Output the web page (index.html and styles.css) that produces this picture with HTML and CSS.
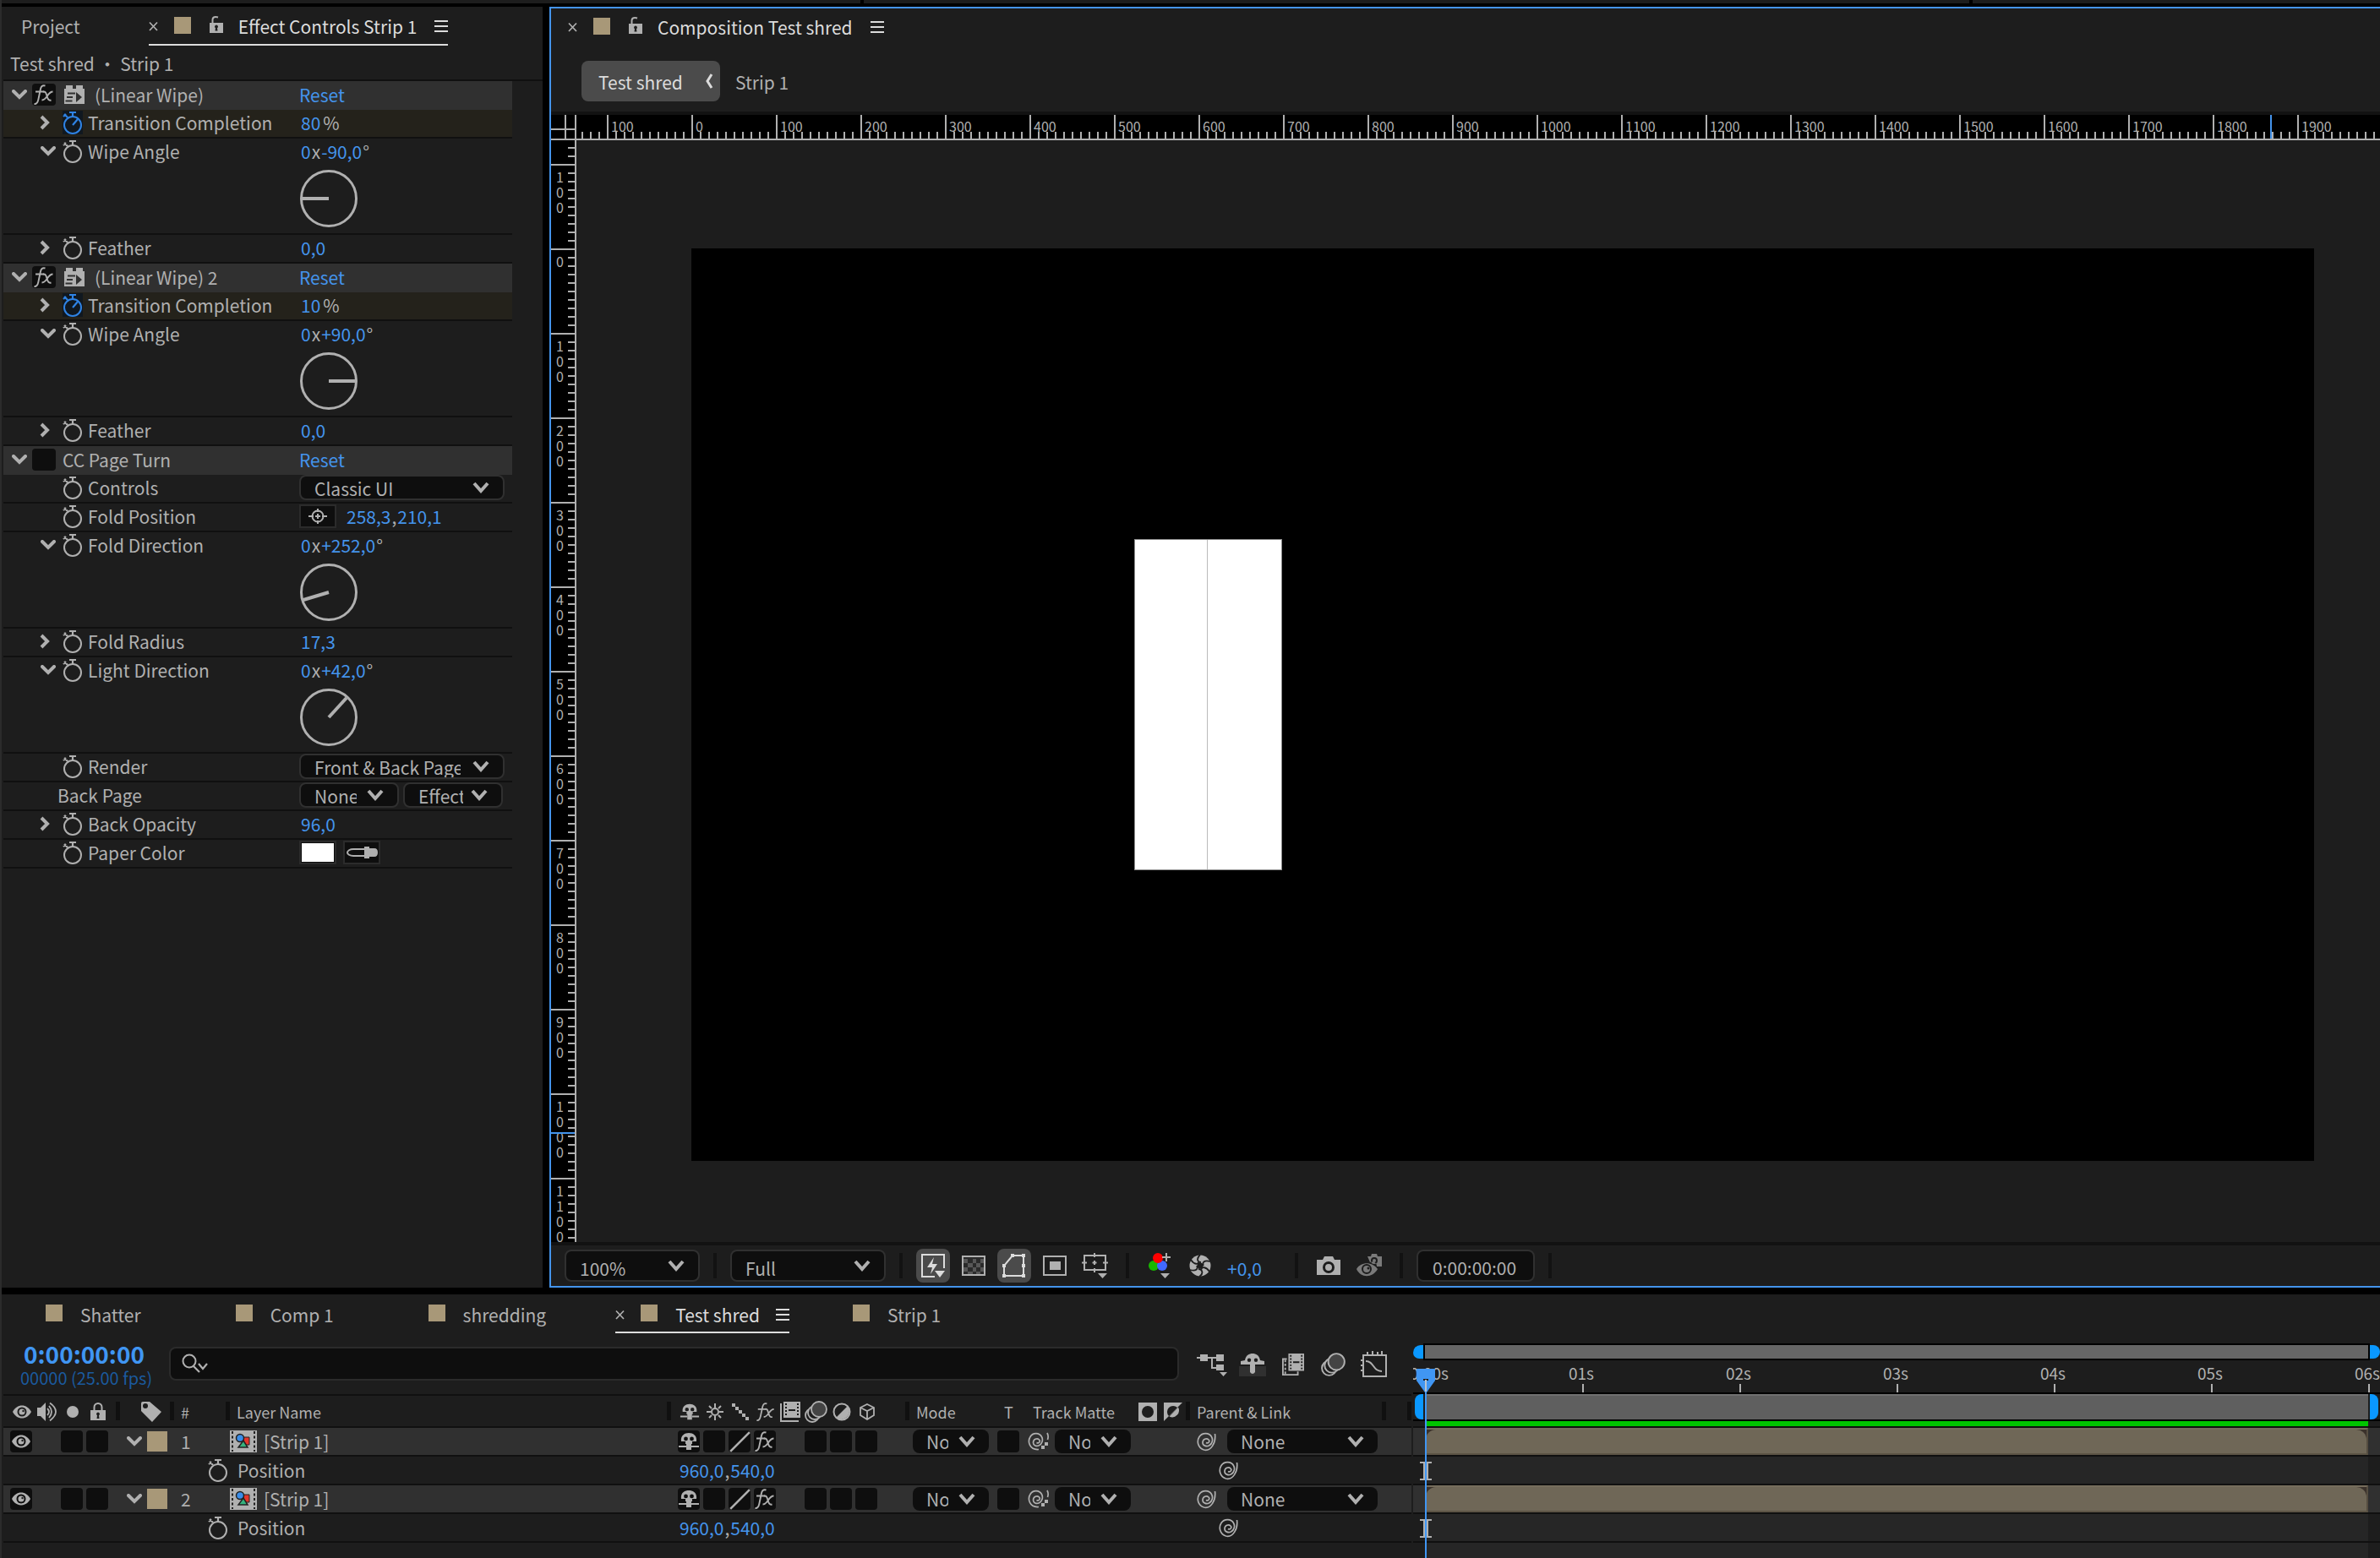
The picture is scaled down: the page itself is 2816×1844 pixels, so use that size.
FILE: index.html
```html
<!DOCTYPE html>
<html lang="en">
<head>
<meta charset="utf-8">
<title>Composition Test shred</title>
<link rel="stylesheet" href="styles.css">
</head>
<body>
<svg class="sprite" aria-hidden="true">
  <symbol id="close" viewBox="0 0 12 12"><path d="M1 1.500 10 11M10 1.500 1 11" fill="none" stroke="currentColor" stroke-width="1.700"/></symbol>
  <symbol id="menu" viewBox="0 0 16 16"><path d="M0 2h16M0 8h16M0 14h16" stroke="currentColor" stroke-width="2"/></symbol>
  <symbol id="unlock" viewBox="0 0 16 20"><path d="M3.500 9V4.500C3.500 1 7 .5 10 1.500" fill="none" stroke="currentColor" stroke-width="2"/><path fill="currentColor" fill-rule="evenodd" d="M0 8h16v12H0zM8 10.500a2 2 0 0 0-1 3.700L6.500 17.500h3L9 14.200a2 2 0 0 0-1-3.700z"/></symbol>
  <symbol id="lock" viewBox="0 0 18 22"><path d="M4.500 10V5.500a4.500 4.500 0 0 1 9 0V10" fill="none" stroke="currentColor" stroke-width="2"/><path fill="currentColor" fill-rule="evenodd" d="M0 9h18v12H0zM9 11.500a2 2 0 0 0-1 3.700L7.500 19h3L10 15.200a2 2 0 0 0-1-3.700z"/></symbol>
  <symbol id="down" viewBox="0 0 18 12"><path d="M2 2l7 7 7-7" fill="none" stroke="currentColor" stroke-width="4" stroke-linecap="round"/></symbol>
  <symbol id="right" viewBox="0 0 12 18"><path d="M2 2l7 7-7 7" fill="none" stroke="currentColor" stroke-width="4"/></symbol>
  <symbol id="fx" viewBox="0 0 26 26"><path d="M1.500 24c3 .5 4-1.500 4.800-5L8.800 7C9.500 3.500 11 1.500 14.500 2.500M3 9.500h10" fill="none" stroke="currentColor" stroke-width="1.900"/><path d="M12 9.500c3-.5 3.500 1.500 4.500 5s2 6 5 5M23.500 9.500c-3 0-4.500 2-6.500 5s-3.500 5-6.500 5" fill="none" stroke="currentColor" stroke-width="1.900"/></symbol>
  <symbol id="brick" viewBox="0 0 24 24"><path fill="currentColor" fill-rule="evenodd" d="M2 1h8v4h4V1h8v4h2v18H0V5h2zM4 9.500v2h9v-2zM3 14v2h7v-2zM1.500 18.500v2h8v-2zM14 9v12l7-6z"/></symbol>
  <symbol id="watch" viewBox="0 0 24 28"><ellipse cx="12" cy="17" rx="10" ry="10" fill="none" stroke="currentColor" stroke-width="2"/><path d="M8 2h8M12 2v5M2 4l4 4M1 7l3-3" fill="none" stroke="currentColor" stroke-width="2.200"/></symbol>
  <symbol id="watch-on" viewBox="0 0 24 28"><ellipse cx="12" cy="17" rx="10" ry="10" fill="none" stroke="currentColor" stroke-width="2"/><path d="M8 2h8M12 2v5M2 4l4 4M1 7l3-3M12 17l6-7" fill="none" stroke="currentColor" stroke-width="2.200"/></symbol>
  <symbol id="target" viewBox="0 0 24 20"><circle cx="12" cy="10" r="6.500" fill="none" stroke="currentColor" stroke-width="2"/><path d="M1 10h6M17 10h6M12 1v4M12 15v4M9 10h6M12 7v6" stroke="currentColor" stroke-width="2"/></symbol>
  <symbol id="dropper" viewBox="0 0 38 14"><path d="M24 3H9C5 3 2 5 2 7s3 4 7 4h15" fill="none" stroke="currentColor" stroke-width="2"/><path fill="currentColor" d="M22 0h6v2h6q4 0 4 5t-4 5h-6v2h-6z"/></symbol>
  <symbol id="fast" viewBox="0 0 30 30"><path d="M28 18V2H2v26h15" fill="none" stroke="currentColor" stroke-width="2"/><path fill="currentColor" d="M16 5 8 17h6l-2 8 8-12h-6zM17 21h12l-6 8z"/></symbol>
  <symbol id="checker" viewBox="0 0 28 24"><path d="M1 1h26v22H1z" fill="#2a2a2a" stroke="currentColor" stroke-width="2"/><path fill="#575757" d="M2 4h5v5H2zM13 4h4v5h-4zM7 9h6v5H7zM17 9h5v5h-5zM2 14h5v5H2zM13 14h4v5h-4zM22 4h4v5h-4zM22 14h4v5h-4zM7 19h6v3H7zM17 19h5v3h-5z"/></symbol>
  <symbol id="mask" viewBox="0 0 30 30"><path d="M3 27V15L13 3h13v24z" fill="none" stroke="currentColor" stroke-width="2"/><path fill="currentColor" d="M1 25h4v4H1zM1 13h4v4H1zM11 1h4v4h-4zM24 1h4v4h-4zM24 13h4v4h-4zM24 25h4v4h-4z"/></symbol>
  <symbol id="region" viewBox="0 0 28 24"><path d="M1 1h26v22H1z" fill="none" stroke="currentColor" stroke-width="2"/><path fill="currentColor" d="M8 7h13v10H8z"/></symbol>
  <symbol id="guides" viewBox="0 0 32 30"><path d="M3 3h25v17H3zM15 0v5M15 18v5M0 11.500h6M25 11.500h6M15 9v5M12.500 11.500h5" fill="none" stroke="currentColor" stroke-width="2"/><path fill="currentColor" d="M19 24h11l-5.500 6z"/></symbol>
  <symbol id="rgb" viewBox="0 0 28 30"><circle cx="7" cy="15" r="6" fill="#18b800"/><circle cx="17" cy="15" r="6" fill="#4169ff"/><circle cx="12" cy="6" r="6" fill="#f00"/><path d="M22 0v10M17 5h10" stroke="currentColor" stroke-width="2"/><path fill="currentColor" d="M15 24h11l-5.500 6z"/></symbol>
  <symbol id="shutter" viewBox="0 0 26 26"><circle cx="13" cy="13" r="12.500" fill="currentColor"/><path d="M13 0c-5 5-3 9 1 9M25 8c-7-2-10 1-8 5M24 20c-4-6-9-6-10-2M12 26c6-4 3-9-1-9M1 18c7 2 10-1 8-5M2 6c4 6 9 6 10 2" fill="none" stroke="#1d1d1d" stroke-width="1.800"/><circle cx="13" cy="13" r="3.500" fill="#1d1d1d"/></symbol>
  <symbol id="camera" viewBox="0 0 28 24"><path fill="currentColor" fill-rule="evenodd" d="M9 1h10l2 4h7v18H0V5h7zM14 7a7 7 0 1 0 0 14 7 7 0 0 0 0-14zm0 3a4 4 0 1 1 0 8 4 4 0 0 1 0-8z"/></symbol>
  <symbol id="snap" viewBox="0 0 30 28"><path fill="currentColor" fill-rule="evenodd" d="M13 3h4l1-3h6l1 3h5v12h-6c0-6-6-6-8-5zM21 4a4 4 0 1 0 0 8 4 4 0 0 0 0-8zm0 2a2 2 0 1 1 0 4 2 2 0 0 1 0-4zM0 18C5 9 19 9 25 18c-6 11-20 11-25 0zm12-6a6 6 0 1 0 0 12 6 6 0 0 0 0-12z"/><circle cx="12" cy="18" r="4" fill="currentColor"/><circle cx="14" cy="17" r="1.500" fill="#1d1d1d"/></symbol>
  <symbol id="search" viewBox="0 0 32 24"><circle cx="9" cy="9" r="7.500" fill="none" stroke="currentColor" stroke-width="2"/><path d="M14 15l7 7M20 12l5 6 5-6" fill="none" stroke="currentColor" stroke-width="2.200"/></symbol>
  <symbol id="eye" viewBox="0 0 22 16"><path fill="currentColor" fill-rule="evenodd" d="M0 8C5-2 17-2 22 8c-5 10-17 10-22 0zM11 2.500a5.500 5.500 0 1 0 0 11 5.500 5.500 0 0 0 0-11z"/><circle cx="11" cy="8" r="3.500" fill="currentColor"/><circle cx="12.500" cy="7" r="1.200" fill="#1d1d1d"/></symbol>
  <symbol id="speaker" viewBox="0 0 24 24"><path fill="currentColor" d="M0 7h4l6-6v22l-6-6H0z"/><path d="M12 8q4 4 0 8M14 5q6 7 0 14M15 1.500q14 10 0 21" fill="none" stroke="currentColor" stroke-width="1.800"/></symbol>
  <symbol id="dot" viewBox="0 0 14 14"><circle cx="7" cy="7" r="7" fill="currentColor"/></symbol>
  <symbol id="tag" viewBox="0 0 24 24"><path fill="currentColor" fill-rule="evenodd" d="M0 2q0-2 2-2h8l14 12-11 12L0 11zm5 0a3 3 0 1 0 0 6 3 3 0 0 0 0-6z"/></symbol>
  <symbol id="shy" viewBox="0 0 26 22"><path fill="currentColor" fill-rule="evenodd" d="M4 11C3 4 8 1 13 1s10 3 9 10h-5v3h-1v7h-6v-7H9v-3zM9.500 5.500a2.400 2.400 0 1 0 0 4.800 2.400 2.400 0 0 0 0-4.800zm7 0a2.400 2.400 0 1 0 0 4.800 2.400 2.400 0 0 0 0-4.800z"/><path d="M1 17h9M16 17h9" stroke="currentColor" stroke-width="2"/></symbol>
  <symbol id="sun" viewBox="0 0 22 22"><circle cx="11" cy="11" r="4" fill="none" stroke="currentColor" stroke-width="2"/><path d="M11 1v5M11 16v5M1 11h5M16 11h5M4 4l3 3M15 15l3 3M18 4l-3 3M7 15l-3 3" stroke="currentColor" stroke-width="2"/></symbol>
  <symbol id="stairs" viewBox="0 0 20 20"><path fill="currentColor" d="M0 0h4v4H0zM4 4h4v4H4zM8 8h4v4H8zM12 12h4v4h-4zM16 16h4v4h-4z"/></symbol>
  <symbol id="slash" viewBox="0 0 24 24"><path d="M2 23 23 2" stroke="currentColor" stroke-width="2.400"/></symbol>
  <symbol id="film" viewBox="0 0 26 24"><path d="M1 2v21h21" fill="none" stroke="currentColor" stroke-width="2"/><path fill="currentColor" fill-rule="evenodd" d="M4 0h20v19H4zM6 2v2h2V2zM6 6v2h2V6zM6 10v2h2v-2zM6 14v2h2v-2zM20 2v2h2V2zM20 6v2h2V6zM20 10v2h2v-2zM20 14v2h2v-2zM10 9v2h8V9z"/></symbol>
  <symbol id="blur" viewBox="0 0 28 28"><circle cx="9" cy="18" r="8" fill="none" stroke="currentColor" stroke-width="1.800"/><circle cx="12" cy="15" r="8" fill="#1d1d1d" stroke="currentColor" stroke-width="1.800"/><circle cx="17" cy="11" r="9" fill="#444" stroke="currentColor" stroke-width="1.800"/></symbol>
  <symbol id="adjust" viewBox="0 0 22 22"><circle cx="11" cy="11" r="9.500" fill="none" stroke="currentColor" stroke-width="2"/><path fill="currentColor" d="M18 4a10 10 0 0 1-14 14z"/></symbol>
  <symbol id="cube" viewBox="0 0 20 20"><path d="M10 1l8 4v9l-8 5-8-5V5zM2 5l8 4 8-4M10 9v10" fill="none" stroke="currentColor" stroke-width="1.800"/></symbol>
  <symbol id="matte-a" viewBox="0 0 22 22"><path fill="currentColor" fill-rule="evenodd" d="M0 0h22v22H0zM11 4a7 7 0 1 0 0 14 7 7 0 0 0 0-14z"/></symbol>
  <symbol id="matte-b" viewBox="0 0 22 22"><path fill="currentColor" d="M0 0h22L0 22z"/><path fill="#1d1d1d" d="M16 6A7 7 0 0 0 6 16z"/><path fill="currentColor" d="M17 5.500A8 8 0 0 1 6.500 16.500z"/></symbol>
  <symbol id="swirl" viewBox="0 0 24 24"><path d="M11 13.500c2.500 1.500 5-1.500 3-3.500-2.500-2.500-7-.5-7 3.500 0 3.500 4.500 5 7.500 3.500 4-2 5-7 3-10.500C15 1.500 6.500 1 3 6.500-.5 12 1.500 20 8.500 22 16.500 24 23 14 21.500 3" fill="none" stroke="currentColor" stroke-width="1.700"/></symbol>
  <symbol id="swirl-dot" viewBox="0 0 26 24"><path d="M10.500 13.500c2.500 1.500 5-1.500 3-3.500-2.500-2.500-7-.5-7 3.500 0 3.500 4 4.500 6.500 3.500 4-1.500 5.500-7 3.500-10.500C14 1.500 6 1 3 6.500-.5 12 2 22.500 13 21.500M23 2q2 4 .5 8" fill="none" stroke="currentColor" stroke-width="1.700"/><path fill="currentColor" d="M16 17h4v4h-4zM20 13h4v4h-4z"/></symbol>
  <symbol id="comp" viewBox="0 0 32 26"><path fill="#b0b0b0" d="M0 0h32v26H0z"/><path d="M3 1v24M29 1v24" stroke="#222" stroke-width="2" stroke-dasharray="3 2.500"/><path fill="#e5352b" stroke="#222" d="M15 8h8v9h-8z"/><circle cx="12" cy="9" r="4.500" fill="#3a8de8" stroke="#222" stroke-width="1.500"/><path fill="#35b37e" stroke="#222" stroke-width="1.500" d="M16 12l5 8H10z"/></symbol>
  <symbol id="tree" viewBox="0 0 36 28"><path fill="currentColor" d="M4 2h9v8H4zM23 2h9v8h-9zM23 14h9v7h-9zM27 23h9l-4.500 5z"/><path d="M0 6h24M18 6v12h6" fill="none" stroke="currentColor" stroke-width="2"/></symbol>
  <symbol id="shy-big" viewBox="0 0 32 28"><path fill="#303030" d="M0 16h32v12H0z"/><path fill="currentColor" fill-rule="evenodd" d="M7 9c1-6 5-8 9-8s8 2 9 8l5 1v4H19v9q-3 4-6 0v-9H2v-4zm5-2.500a2.200 2.200 0 1 0 0 4.400 2.200 2.200 0 0 0 0-4.400zm8 0a2.200 2.200 0 1 0 0 4.400 2.200 2.200 0 0 0 0-4.400z"/></symbol>
  <symbol id="film-big" viewBox="0 0 28 28"><path d="M6 7H1v20h19v-4" fill="none" stroke="currentColor" stroke-width="2"/><path d="M4 8v18" stroke="currentColor" stroke-width="2" stroke-dasharray="3 2"/><path fill="currentColor" fill-rule="evenodd" d="M8 0h20v22H8zM10 2v2h2V2zM10 6v2h2V6zM10 10v2h2v-2zM10 14v2h2v-2zM10 18v2h2v-2zM24 2v2h2V2zM24 6v2h2V6zM24 10v2h2v-2zM24 14v2h2v-2zM24 18v2h2v-2zM14 10v2h8v-2z"/></symbol>
  <symbol id="graph" viewBox="0 0 32 32"><path d="M3 5h27v25H3zM8 5V1M14 5V0M20 5V1M25 5V0M3 11H0M3 17H0M3 23H0M6 12c10 0 8 12 19 12" fill="none" stroke="currentColor" stroke-width="2"/></symbol>
  <symbol id="ibeam" viewBox="0 0 14 22"><path fill="currentColor" d="M0 0h14v2h-4v18h4v2H0v-2h4V2H0z"/></symbol>
</svg>

<div class="strip"><i class="strip-gap"></i><i class="strip-gap"></i></div>

<div class="upper">
  <section class="effects" aria-label="Effect Controls">
    <div class="tabs effects-tabs">
      <button class="tab">Project</button>
      <div class="tab tab-on tab-fx"><svg class="x"><use href="#close"/></svg><i class="chip"></i><svg class="lk"><use href="#unlock"/></svg><span>Effect Controls Strip 1</span><svg class="mn"><use href="#menu"/></svg></div>
    </div>
    <p class="source">Test shred • Strip 1</p>

    <div class="list">
      <div class="head"><svg class="tw-d"><use href="#down"/></svg><label class="sw sw-fx"><input type="checkbox" aria-label="Enable (Linear Wipe)"><svg><use href="#fx"/></svg></label><svg class="brick"><use href="#brick"/></svg><span class="name">(Linear Wipe)</span><button class="val">Reset</button></div>
      <div class="row keyed"><div class="lab"><svg class="tw-r"><use href="#right"/></svg><svg class="watch on"><use href="#watch-on"/></svg>Transition Completion</div><span class="num pct"><button class="val">80</button>%</span></div>
      <div class="row bare"><div class="lab"><svg class="tw-d"><use href="#down"/></svg><svg class="watch"><use href="#watch"/></svg>Wipe Angle</div><span class="num"><button class="val">0</button>x<button class="val">-90,0</button>°</span></div>
      <div class="dial"><svg viewBox="0 0 68 68"><circle cx="34" cy="34" r="32.500"/><path d="M34 34H2"/></svg></div>
      <div class="row"><div class="lab"><svg class="tw-r"><use href="#right"/></svg><svg class="watch"><use href="#watch"/></svg>Feather</div><span class="num"><button class="val">0,0</button></span></div>

      <div class="head"><svg class="tw-d"><use href="#down"/></svg><label class="sw sw-fx"><input type="checkbox" aria-label="Enable (Linear Wipe) 2"><svg><use href="#fx"/></svg></label><svg class="brick"><use href="#brick"/></svg><span class="name">(Linear Wipe) 2</span><button class="val">Reset</button></div>
      <div class="row keyed"><div class="lab"><svg class="tw-r"><use href="#right"/></svg><svg class="watch on"><use href="#watch-on"/></svg>Transition Completion</div><span class="num pct"><button class="val">10</button>%</span></div>
      <div class="row bare"><div class="lab"><svg class="tw-d"><use href="#down"/></svg><svg class="watch"><use href="#watch"/></svg>Wipe Angle</div><span class="num"><button class="val">0</button>x<button class="val">+90,0</button>°</span></div>
      <div class="dial"><svg viewBox="0 0 68 68"><circle cx="34" cy="34" r="32.500"/><path d="M34 34H66"/></svg></div>
      <div class="row"><div class="lab"><svg class="tw-r"><use href="#right"/></svg><svg class="watch"><use href="#watch"/></svg>Feather</div><span class="num"><button class="val">0,0</button></span></div>

      <div class="head"><svg class="tw-d"><use href="#down"/></svg><label class="sw sw-fx"><input type="checkbox" aria-label="Enable CC Page Turn"></label><span class="name name-near">CC Page Turn</span><button class="val">Reset</button></div>
      <div class="row"><label class="lab" for="controls"><i class="tw-r"></i><svg class="watch"><use href="#watch"/></svg>Controls</label><select id="controls" class="drop w-full"><option>Classic UI</option></select></div>
      <div class="row"><div class="lab"><i class="tw-r"></i><svg class="watch"><use href="#watch"/></svg>Fold Position</div><button class="pick" aria-label="Pick point"><svg class="target"><use href="#target"/></svg></button><span class="num"><button class="val">258,3</button>,<button class="val">210,1</button></span></div>
      <div class="row bare"><div class="lab"><svg class="tw-d"><use href="#down"/></svg><svg class="watch"><use href="#watch"/></svg>Fold Direction</div><span class="num"><button class="val">0</button>x<button class="val">+252,0</button>°</span></div>
      <div class="dial"><svg viewBox="0 0 68 68"><circle cx="34" cy="34" r="32.500"/><path d="M34 34 4 43"/></svg></div>
      <div class="row"><div class="lab"><svg class="tw-r"><use href="#right"/></svg><svg class="watch"><use href="#watch"/></svg>Fold Radius</div><span class="num"><button class="val">17,3</button></span></div>
      <div class="row bare"><div class="lab"><svg class="tw-d"><use href="#down"/></svg><svg class="watch"><use href="#watch"/></svg>Light Direction</div><span class="num"><button class="val">0</button>x<button class="val">+42,0</button>°</span></div>
      <div class="dial"><svg viewBox="0 0 68 68"><circle cx="34" cy="34" r="32.500"/><path d="M34 34 55 11"/></svg></div>
      <div class="row"><label class="lab" for="render"><i class="tw-r"></i><svg class="watch"><use href="#watch"/></svg>Render</label><select id="render" class="drop w-full"><option>Front &amp; Back Page</option></select></div>
      <div class="row"><label class="lab lab-plain" for="back">Back Page</label><select id="back" class="drop w-half"><option>None</option></select><select class="drop w-half" aria-label="Back page source"><option>Effects &amp; Masks</option></select></div>
      <div class="row"><div class="lab"><svg class="tw-r"><use href="#right"/></svg><svg class="watch"><use href="#watch"/></svg>Back Opacity</div><span class="num"><button class="val">96,0</button></span></div>
      <div class="row"><div class="lab"><i class="tw-r"></i><svg class="watch"><use href="#watch"/></svg>Paper Color</div><button class="pick" aria-label="Paper color"><i class="paper"></i></button><button class="pick" aria-label="Eyedropper"><svg class="dropper"><use href="#dropper"/></svg></button></div>
    </div>
  </section>

  <section class="viewer" aria-label="Composition">
    <div class="tabs viewer-tabs">
      <div class="tab tab-on tab-comp"><svg class="x"><use href="#close"/></svg><i class="chip"></i><svg class="lk"><use href="#unlock"/></svg><span>Composition Test shred</span><svg class="mn"><use href="#menu"/></svg></div>
    </div>
    <nav class="crumbs"><button class="crumb crumb-on">Test shred<svg viewBox="0 0 10 18"><path d="M8 1 3 9l5 8" fill="none" stroke="currentColor" stroke-width="3"/></svg></button><button class="crumb">Strip 1</button></nav>
    <div class="stage">
      <div class="corner"></div>
      <div class="rule-x"><ol><li>100</li><li>0</li><li>100</li><li>200</li><li>300</li><li>400</li><li>500</li><li>600</li><li>700</li><li>800</li><li>900</li><li>1000</li><li>1100</li><li>1200</li><li>1300</li><li>1400</li><li>1500</li><li>1600</li><li>1700</li><li>1800</li><li>1900</li></ol><i class="mark-x"></i></div>
      <div class="rule-y"><ol><li>100</li><li>0</li><li>100</li><li>200</li><li>300</li><li>400</li><li>500</li><li>600</li><li>700</li><li>800</li><li>900</li><li>1000</li><li>1100</li></ol><i class="mark-y"></i></div>
      <div class="view"><div class="canvas"><div class="paper-strip"></div></div></div>
    </div>
    <div class="bar">
      <select class="drop zoom" aria-label="Magnification"><option>100%</option></select>
      <i class="sep"></i>
      <select class="drop res" aria-label="Resolution"><option>Full</option></select>
      <i class="sep"></i>
      <div class="tools">
        <button class="tool tool-on" aria-label="Fast previews"><svg class="i30"><use href="#fast"/></svg></button>
        <button class="tool" aria-label="Transparency grid"><svg class="i28"><use href="#checker"/></svg></button>
        <button class="tool tool-on" aria-label="Mask visibility"><svg class="i30"><use href="#mask"/></svg></button>
        <button class="tool" aria-label="Region of interest"><svg class="i28"><use href="#region"/></svg></button>
        <button class="tool" aria-label="Guides"><svg class="i32"><use href="#guides"/></svg></button>
      </div>
      <i class="sep"></i>
      <div class="tools">
        <button class="tool" aria-label="Channels"><svg class="i30"><use href="#rgb"/></svg></button>
        <button class="tool" aria-label="Reset exposure"><svg class="i28"><use href="#shutter"/></svg></button>
        <button class="val exposure">+0,0</button>
      </div>
      <i class="sep"></i>
      <div class="tools">
        <button class="tool" aria-label="Take snapshot"><svg class="i28"><use href="#camera"/></svg></button>
        <button class="tool dim" aria-label="Show snapshot"><svg class="i30"><use href="#snap"/></svg></button>
      </div>
      <i class="sep"></i>
      <input class="time" aria-label="Preview time" value="0:00:00:00">
      <i class="sep"></i>
    </div>
  </section>
</div>

<section class="timeline" aria-label="Timeline">
  <div class="tabs tl-tabs">
    <button class="tab"><i class="chip"></i>Shatter</button>
    <button class="tab"><i class="chip"></i>Comp 1</button>
    <button class="tab"><i class="chip"></i>shredding</button>
    <div class="tab tab-on"><svg class="x"><use href="#close"/></svg><i class="chip"></i><span>Test shred</span><svg class="mn"><use href="#menu"/></svg></div>
    <button class="tab"><i class="chip"></i>Strip 1</button>
  </div>
  <div class="tl-body">
    <div class="layers">
      <div class="tl-tools">
        <div class="clock"><button class="clock-main">0:00:00:00</button><span class="clock-sub">00000 (25.00 fps)</span></div>
        <label class="search"><svg><use href="#search"/></svg><input type="text" aria-label="Search layers"></label>
        <div class="tools">
          <button class="tool" aria-label="Mini-flowchart"><svg class="i36"><use href="#tree"/></svg></button>
          <button class="tool" aria-label="Hide shy layers"><svg class="i32"><use href="#shy-big"/></svg></button>
          <button class="tool" aria-label="Frame blending"><svg class="i28"><use href="#film-big"/></svg></button>
          <button class="tool" aria-label="Motion blur"><svg class="i30"><use href="#blur"/></svg></button>
          <button class="tool" aria-label="Graph editor"><svg class="i32"><use href="#graph"/></svg></button>
        </div>
      </div>
      <table class="grid">
        <colgroup><col class="c-av"><col class="c-tag"><col class="c-no"><col class="c-name"><col class="c-sw"><col class="c-mode"><col class="c-parent"><col class="c-end"></colgroup>
        <thead>
          <tr>
            <th><div class="slots"><span><svg class="g-eye"><use href="#eye"/></svg></span><span><svg class="g24"><use href="#speaker"/></svg></span><span><svg class="g14"><use href="#dot"/></svg></span><span><svg class="g-lock"><use href="#lock"/></svg></span></div></th>
            <th><div class="tagc"><svg class="g24"><use href="#tag"/></svg></div></th>
            <th><div class="pad">#</div></th>
            <th><div class="pad">Layer Name</div></th>
            <th><div class="slots"><span><svg class="g24"><use href="#shy"/></svg></span><span><svg class="g22"><use href="#sun"/></svg></span><span><svg class="g20"><use href="#stairs"/></svg></span><span><svg class="g26"><use href="#fx"/></svg></span><span><svg class="g26"><use href="#film"/></svg></span><span><svg class="g28"><use href="#blur"/></svg></span><span><svg class="g22"><use href="#adjust"/></svg></span><span><svg class="g20"><use href="#cube"/></svg></span></div></th>
            <th><div class="modes"><span>Mode</span><span>T</span><span>Track Matte</span><svg class="g22"><use href="#matte-a"/></svg><svg class="g22"><use href="#matte-b"/></svg></div></th>
            <th><div class="pad">Parent &amp; Link</div></th>
            <th></th>
          </tr>
        </thead>
        <tbody>
          <tr class="layer">
            <td><div class="slots"><label class="sw"><input type="checkbox" aria-label="Video"><svg class="g-eye"><use href="#eye"/></svg></label><span></span><label class="sw"><input type="checkbox" aria-label="Solo"></label><label class="sw"><input type="checkbox" aria-label="Lock"></label></div></td>
            <td><div class="twirl"><svg class="tw-d"><use href="#down"/></svg><i class="label-chip"></i></div></td>
            <td><div class="pad">1</div></td>
            <td><div class="lname"><svg><use href="#comp"/></svg>[Strip 1]</div></td>
            <td><div class="slots"><label class="sw"><input type="checkbox" aria-label="Shy"><svg class="g26"><use href="#shy"/></svg></label><label class="sw"><input type="checkbox" aria-label="Collapse"></label><label class="sw"><input type="checkbox" aria-label="Quality"><svg class="g24"><use href="#slash"/></svg></label><label class="sw"><input type="checkbox" aria-label="Effects"><svg class="g26"><use href="#fx"/></svg></label><span></span><label class="sw"><input type="checkbox" aria-label="Motion blur"></label><label class="sw"><input type="checkbox" aria-label="Adjustment"></label><label class="sw"><input type="checkbox" aria-label="3D"></label></div></td>
            <td><div class="mrow"><select class="drop flat" aria-label="Mode"><option>Normal</option></select><label class="sw"><input type="checkbox" aria-label="Preserve transparency"></label><svg class="g26"><use href="#swirl-dot"/></svg><select class="drop flat" aria-label="Track matte"><option>No Matte</option></select></div></td>
            <td><div class="prow"><svg class="g24"><use href="#swirl"/></svg><select class="drop flat" aria-label="Parent"><option>None</option></select></div></td>
            <td></td>
          </tr>
          <tr>
            <td colspan="4"><div class="prop"><svg class="watch"><use href="#watch"/></svg>Position</div></td>
            <td><div class="pval"><button class="val">960,0</button>,<button class="val">540,0</button></div></td>
            <td></td>
            <td><div class="plink"><svg class="g24"><use href="#swirl"/></svg></div></td>
            <td></td>
          </tr>
          <tr class="layer">
            <td><div class="slots"><label class="sw"><input type="checkbox" aria-label="Video"><svg class="g-eye"><use href="#eye"/></svg></label><span></span><label class="sw"><input type="checkbox" aria-label="Solo"></label><label class="sw"><input type="checkbox" aria-label="Lock"></label></div></td>
            <td><div class="twirl"><svg class="tw-d"><use href="#down"/></svg><i class="label-chip"></i></div></td>
            <td><div class="pad">2</div></td>
            <td><div class="lname"><svg><use href="#comp"/></svg>[Strip 1]</div></td>
            <td><div class="slots"><label class="sw"><input type="checkbox" aria-label="Shy"><svg class="g26"><use href="#shy"/></svg></label><label class="sw"><input type="checkbox" aria-label="Collapse"></label><label class="sw"><input type="checkbox" aria-label="Quality"><svg class="g24"><use href="#slash"/></svg></label><label class="sw"><input type="checkbox" aria-label="Effects"><svg class="g26"><use href="#fx"/></svg></label><span></span><label class="sw"><input type="checkbox" aria-label="Motion blur"></label><label class="sw"><input type="checkbox" aria-label="Adjustment"></label><label class="sw"><input type="checkbox" aria-label="3D"></label></div></td>
            <td><div class="mrow"><select class="drop flat" aria-label="Mode"><option>Normal</option></select><label class="sw"><input type="checkbox" aria-label="Preserve transparency"></label><svg class="g26"><use href="#swirl-dot"/></svg><select class="drop flat" aria-label="Track matte"><option>No Matte</option></select></div></td>
            <td><div class="prow"><svg class="g24"><use href="#swirl"/></svg><select class="drop flat" aria-label="Parent"><option>None</option></select></div></td>
            <td></td>
          </tr>
          <tr>
            <td colspan="4"><div class="prop"><svg class="watch"><use href="#watch"/></svg>Position</div></td>
            <td><div class="pval"><button class="val">960,0</button>,<button class="val">540,0</button></div></td>
            <td></td>
            <td><div class="plink"><svg class="g24"><use href="#swirl"/></svg></div></td>
            <td></td>
          </tr>
        </tbody>
      </table>
    </div>
    <div class="tracks">
      <div class="navi"><i class="cap-l"></i><i class="navi-bar"></i><i class="cap-r"></i></div>
      <ol class="seconds"><li>0:00s</li><li>01s</li><li>02s</li><li>03s</li><li>04s</li><li>05s</li><li>06s</li></ol>
      <div class="work"><i class="cap-l"></i><i class="work-bar"></i><i class="cap-r"></i></div>
      <div class="cached"><i></i></div>
      <div class="track track-layer"><i class="clip"></i></div>
      <div class="track"><i class="span"><svg><use href="#ibeam"/></svg></i></div>
      <div class="track track-layer"><i class="clip"></i></div>
      <div class="track"><i class="span"><svg><use href="#ibeam"/></svg></i></div>
      <div class="track track-rest"><i class="span"></i></div>
      <div class="playhead"><svg viewBox="0 0 22 28"><path fill="#4096f3" d="M0 0h22v14L12 28h-2L0 14z"/><path d="M8 13h6" stroke="#1d1d1d" stroke-width="2"/><path d="M11 13v14" stroke="#b9c3cf" stroke-width="2"/></svg></div>
    </div>
  </div>
</section>
</body>
</html>
```

FILE: styles.css
```css
:root {
  --panel: #1d1d1d;
  --well: #0e0e0e;
  --line: #101010;
  --row: #303030;
  --edge: #303030;
  --text: #b0b0b0;
  --bright: #dcdcdc;
  --blue: #4494ec;
  --chip: #a89878;
  --text-size: 21px;
}

* { box-sizing: border-box; }

body {
  margin: 0;
  min-height: 100vh;
  display: flex;
  flex-direction: column;
  overflow: hidden;
  background: #000;
  border-left: 2px solid #2b2b2b;
  color: var(--text);
  font-family: "Noto Sans CJK SC", "Noto Sans", sans-serif;
  font-size: var(--text-size);
  line-height: 24px;
}

button, select, input { font: inherit; color: inherit; margin: 0; padding: 0; border: 0; background: none; }
button { display: inline-flex; align-items: center; white-space: nowrap; }
ol { list-style: none; margin: 0; padding: 0; }
p { margin: 0; }
i { display: block; flex: none; }
svg { display: block; flex: none; }
.sprite { position: absolute; width: 0; height: 0; }

.val { color: var(--blue); }
.num { display: flex; align-items: center; gap: 1px; padding-left: 2px; }
.num.pct { gap: 3px; }
.chip { width: 20px; height: 20px; background: var(--chip); }

/* top strip */
.strip { height: 4px; background: var(--panel); display: flex; padding-left: 1016px; gap: 1308px; }
.strip-gap { width: 4px; height: 4px; background: #000; }

.upper { display: flex; gap: 8px; padding: 4px 0 8px; }

/* tabs */
.tabs { display: flex; }
.tab { display: flex; align-items: center; padding-top: 2px; border-bottom: 2px solid transparent; white-space: nowrap; }
.tab-on { border-bottom-color: var(--bright); color: var(--bright); }
.tab .x { width: 12px; height: 12px; color: var(--text); }
.tab .mn { width: 16px; height: 16px; margin-left: auto; }
.tab .chip { margin-bottom: 2px; }
.tab .lk { width: 16px; height: 20px; color: var(--text); margin: 0 18px 4px 22px; }
.tab .x + .chip { margin-left: 18px; }

/* effect controls */
.effects { flex: none; width: 640px; background: var(--panel); padding-left: 2px; }
.effects-tabs { height: 46px; padding-left: 21px; gap: 81px; }
.tab-fx { width: 354px; }
.source { height: 42px; padding: 9px 0 0 8px; border-bottom: 2px solid var(--line); }
.list { width: 602px; }
.head { display: flex; align-items: center; height: 34px; padding: 0 0 3px 10px; background: var(--row); }
.head .tw-d { margin-right: 6px; }
.head .brick { width: 24px; height: 24px; margin-left: 10px; }
.head .name { flex: 1; padding-left: 12px; }
.head .name-near { padding-left: 8px; }
.head .val { width: 252px; }
.row { display: flex; align-items: center; height: 34px; padding-bottom: 2px; border-bottom: 2px solid var(--line); }
.row.bare { border-bottom-color: transparent; }
.keyed { background: #24221b; }
.lab { width: 350px; display: flex; align-items: center; padding-left: 42px; }
.lab-plain { padding-left: 64px; }
.tw-d { width: 18px; height: 12px; }
.tw-r { width: 12px; height: 18px; margin-right: 6px; }
.lab .tw-r { margin-left: 1px; }
.lab .tw-d { margin-left: 2px; }
.lab .watch { margin: 0 6px 0 8px; }
.lab .tw-r + .watch { margin-left: 9px; }
.watch { width: 24px; height: 28px; }
.watch.on { color: #2f83e4; background: #101820; }
.dial { height: 80px; padding: 3px 0 0 351px; border-bottom: 2px solid var(--line); }
.dial svg { width: 68px; height: 68px; fill: none; stroke: var(--text); stroke-width: 3; }
.dial path { stroke-width: 4; }
.pick { width: 44px; height: 28px; margin-right: 8px; justify-content: center; background: var(--well); border: 2px solid #2b2b2b; }
.pick + .num { padding-left: 4px; }
.target { width: 24px; height: 20px; }
.dropper { width: 38px; height: 14px; }
.paper { width: 38px; height: 22px; background: #fff; }

/* switches */
.sw { display: grid; width: 26px; height: 26px; place-items: center; }
.sw > * { grid-area: 1 / 1; }
.sw input { appearance: none; width: 26px; height: 26px; background: var(--well); border-radius: 4px; }
.sw svg { position: relative; width: 26px; height: 26px; }
.sw-fx, .sw-fx input { width: 28px; }

/* drop-downs */
.drop {
  appearance: none;
  height: 30px;
  padding: 0 50px 0 16px;
  border: 2px solid var(--edge);
  border-radius: 8px;
  background: var(--well) url("data:image/svg+xml,%3Csvg xmlns='http://www.w3.org/2000/svg' width='20' height='14'%3E%3Cpath d='M2 2l8 9 8-9' fill='none' stroke='%23b0b0b0' stroke-width='4'/%3E%3C/svg%3E") no-repeat right 16px center;
}
.row .drop { padding-top: 1px; }
.row .w-full { width: 243px; }
.row .w-half { width: 118px; padding-right: 48px; }
.row .w-half + .w-half { margin-left: 5px; padding: 1px 45px 0 16px; }
.flat { height: 28px; width: 90px; border: 0; padding-right: 48px; }

/* composition viewer */
.viewer { flex: 1; min-width: 0; background: var(--panel); border: 2px solid var(--blue); border-right: 0; }
.viewer-tabs { height: 42px; padding-left: 20px; }
.tab-comp { width: 374px; border: 0; }
.crumbs { display: flex; gap: 18px; padding: 20px 0 12px 36px; border-bottom: 4px solid #121212; }
.crumb { height: 48px; padding-top: 2px; }
.crumb-on { width: 164px; padding: 2px 8px 0 20px; justify-content: space-between; border-radius: 8px; background: #4b4b4b; color: var(--bright); }
.crumb svg { width: 10px; height: 18px; margin-bottom: 2px; }

.stage { display: grid; grid-template: 30px auto / 30px minmax(0, 1fr); font-size: 16px; line-height: 18px; border-bottom: 4px solid #121212; }
.corner {
  background:
    linear-gradient(var(--text), var(--text)) 16px 0 / 2px 100% no-repeat,
    linear-gradient(var(--text), var(--text)) 0 16px / 100% 2px no-repeat,
    #000;
  border: solid var(--text);
  border-width: 0 2px 2px 0;
}
.rule-x {
  position: relative;
  overflow: hidden;
  border-bottom: 2px solid var(--text);
  background:
    linear-gradient(90deg, var(--text) 2px, transparent 2px) 36px 0 / 100px 28px repeat-x,
    linear-gradient(90deg, var(--text) 2px, transparent 2px) 6px 20px / 10px 8px repeat-x,
    #000;
}
.rule-x ol { display: flex; padding: 4px 0 0 41px; }
.rule-x li { flex: 0 0 100px; }
.mark-x { position: absolute; left: 2004px; top: 0; width: 2px; height: 30px; background: var(--blue); }
.rule-y {
  position: relative;
  overflow: hidden;
  border-right: 2px solid var(--text);
  background:
    linear-gradient(var(--text) 2px, transparent 2px) 0 28px / 28px 100px repeat-y,
    linear-gradient(var(--text) 2px, transparent 2px) 20px 8px / 8px 10px repeat-y,
    #000;
}
.rule-y ol { padding: 28px 0 0 6px; }
.rule-y li { width: 10px; height: 100px; padding-top: 6px; word-break: break-all; }
.rule-y li:last-child { height: 76px; }
.mark-y { position: absolute; left: 0; top: 1174px; width: 30px; height: 2px; background: var(--blue); }
.view { overflow: hidden; padding: 128px 0 96px 136px; }
.canvas { position: relative; width: 1920px; height: 1080px; background: #000; }
.paper-strip { position: absolute; left: 524px; top: 344px; width: 175px; height: 392px; border: 1px solid #8a8a8a; background: linear-gradient(#bbb, #bbb) 85px 0 / 1px 100% no-repeat, #fff; }

.bar { display: flex; align-items: center; gap: 16px; height: 48px; padding: 0 0 0 16px; }
.sep { width: 4px; height: 30px; background: #121212; }
.bar .drop { height: 38px; padding-top: 5px; background-position: right 16px center; }
.zoom { width: 160px; }
.res { width: 184px; }
.tools { display: flex; align-items: center; gap: 8px; }
.tool { width: 40px; height: 40px; justify-content: center; border-radius: 8px; }
.tool-on { background: #4b4b4b; color: var(--bright); }
.dim { color: #7a7a7a; }
.i28 { width: 28px; height: 26px; }
.i30 { width: 30px; height: 30px; }
.i32 { width: 32px; height: 32px; }
.i36 { width: 36px; height: 28px; }
.exposure { width: 68px; padding: 6px 0 0 4px; }
.time { width: 140px; height: 38px; padding: 4px 0 0 17px; border: 2px solid var(--edge); border-radius: 8px; background: var(--well); }

/* timeline */
.timeline { flex: 1; display: flex; flex-direction: column; background: var(--panel); }
.tl-tabs { height: 50px; padding: 0 0 4px 22px; gap: 45px; }
.tl-tabs .tab { padding-top: 4px; }
.tl-tabs .chip { margin-right: 21px; margin-bottom: 4px; }
.tl-tabs button.tab { padding: 4px 37px 0 30px; }
.tl-tabs .mn { margin-left: 19px; }
.tl-body { flex: 1; display: flex; }
.layers { flex: none; width: 1668px; padding-left: 2px; }
.tl-tools { display: flex; align-items: flex-start; height: 70px; padding: 8px 24px 0 10px; border-bottom: 2px solid var(--line); }
.tl-tools .tools { margin-top: 5px; }
.clock { width: 186px; display: flex; flex-direction: column; align-items: flex-start; padding-left: 10px; }
.clock-main { font-size: 28px; font-weight: 700; line-height: 25px; padding-left: 4px; color: #4096f3; }
.clock-sub { font-size: 20px; line-height: 32px; color: #1b5a9e; }
.search { flex: 1; display: flex; align-items: center; height: 40px; margin: 4px 19px 0 0; padding-left: 13px; border: 2px solid #2b2b2b; border-radius: 8px; background: var(--well); }
.search svg { width: 32px; height: 24px; }
.search input { flex: 1; outline: 0; }

.grid { table-layout: fixed; width: 1666px; border-collapse: separate; border-spacing: 0; }
.c-av { width: 138px; } .c-tag { width: 64px; } .c-no { width: 66px; } .c-name { width: 522px; }
.c-sw { width: 282px; } .c-mode { width: 332px; } .c-parent { width: 232px; } .c-end { width: 30px; }
.grid th, .grid td { padding: 0; border-bottom: 2px solid var(--line); font-weight: 400; text-align: left; }
.grid th { height: 38px; padding-top: 2px; font-size: 18px; background: linear-gradient(#101010, #101010) no-repeat right center / 5px 22px; }
.grid td { height: 34px; }
.layer { background: var(--row); }
.grid div { display: flex; align-items: center; }
.slots { gap: 4px; padding-left: 8px; }
.grid th .slots { padding-left: 9px; }
.slots > span { width: 26px; height: 26px; display: flex; align-items: center; justify-content: center; }
.pad { padding-left: 8px; }
.tagc { padding-left: 25px; }
.twirl { gap: 6px; padding-left: 8px; }
.label-chip { width: 24px; height: 24px; background: var(--chip); }
.lname { gap: 8px; }
.lname svg { width: 32px; height: 26px; }
.modes { padding-left: 8px; }
.modes span:nth-child(1) { width: 104px; }
.modes span:nth-child(2) { width: 34px; }
.modes span:nth-child(3) { width: 125px; }
.modes svg + svg { margin-left: 8px; }
.mrow { padding-left: 4px; }
.mrow .sw { margin: 0 10px; }
.mrow .g26 { margin-right: 6px; }
.prow { gap: 12px; padding-left: 8px; }
.prow .drop { width: 178px; }
.prop { gap: 11px; padding-left: 242px; }
.pval { gap: 1px; padding-left: 10px; }
.plink { padding-left: 34px; }
.grid .g-eye { width: 22px; height: 16px; }
.g14 { width: 14px; height: 14px; }
.g20 { width: 20px; height: 20px; }
.g22 { width: 22px; height: 22px; }
.g24 { width: 24px; height: 24px; }
.g26 { width: 26px; height: 24px; }
.g28 { width: 28px; height: 28px; }
.g-lock { width: 18px; height: 22px; }

/* time graph */
.tracks { position: relative; flex: 1; min-width: 0; overflow: hidden; display: flex; flex-direction: column; padding-top: 8px; margin-left: 2px; }
.navi, .work { display: flex; align-items: center; }
.navi i[class^="cap"] { width: 12px; height: 16px; background: #0a98ff; }
.navi .cap-l { border-radius: 10px 0 0 8px; }
.navi .cap-r { border-radius: 0 8px 8px 0; }
.tracks .navi .navi-bar { flex: 1; height: 20px; border: 2px solid #000; background: #666; }
.seconds { display: flex; height: 38px; margin-left: -80px; font-size: 19px; line-height: 29px; background: linear-gradient(90deg, var(--text) 2px, transparent 2px) 94px 28px / 186px 10px repeat-x; }
.seconds li { flex: 0 0 186px; text-align: center; }
.seconds li:first-child { padding-left: 12px; }
.work { height: 34px; border: solid #000; border-width: 2px 0; }
.work .cap-l, .work .cap-r { width: 10px; height: 30px; background: #0a98ff; }
.work .cap-l { margin: 0 2px; border-radius: 8px 0 0 8px; }
.work .cap-r { margin: 0 2px; border-radius: 0 8px 8px 0; }
.work .work-bar { flex: 1; height: 30px; background: #5f5f5f; border-top: 2px solid #707070; }
.cached { height: 8px; padding: 0 14px 0 16px; border-bottom: 2px solid var(--line); }
.cached i { height: 6px; background: #00c400; }
.track { height: 34px; padding: 0 14px 0 15px; border-bottom: 2px solid var(--line); box-shadow: -2px 0 #000; }
.track-layer { background: var(--row); }
.track-rest { flex: 1; border-bottom: 0; }
.clip { height: 32px; background: #3b322b; border: solid #766d5c; border-width: 2px 2px 2px 0; border-right-color: #554d40; border-bottom-color: #5c5445; }
.clip::before { content: ""; display: block; height: 100%; border-radius: 12px 12px 0 0; background: #6f6757; }
.span { height: 100%; background: #262626; }
.span svg { width: 14px; height: 22px; position: relative; left: -7px; top: 6px; }
.playhead { position: absolute; left: 4px; top: 38px; bottom: 0; width: 22px; background: linear-gradient(#4096f3, #4096f3) 10px 0 / 2px 100% no-repeat; }
.playhead svg { width: 22px; height: 28px; }
```
